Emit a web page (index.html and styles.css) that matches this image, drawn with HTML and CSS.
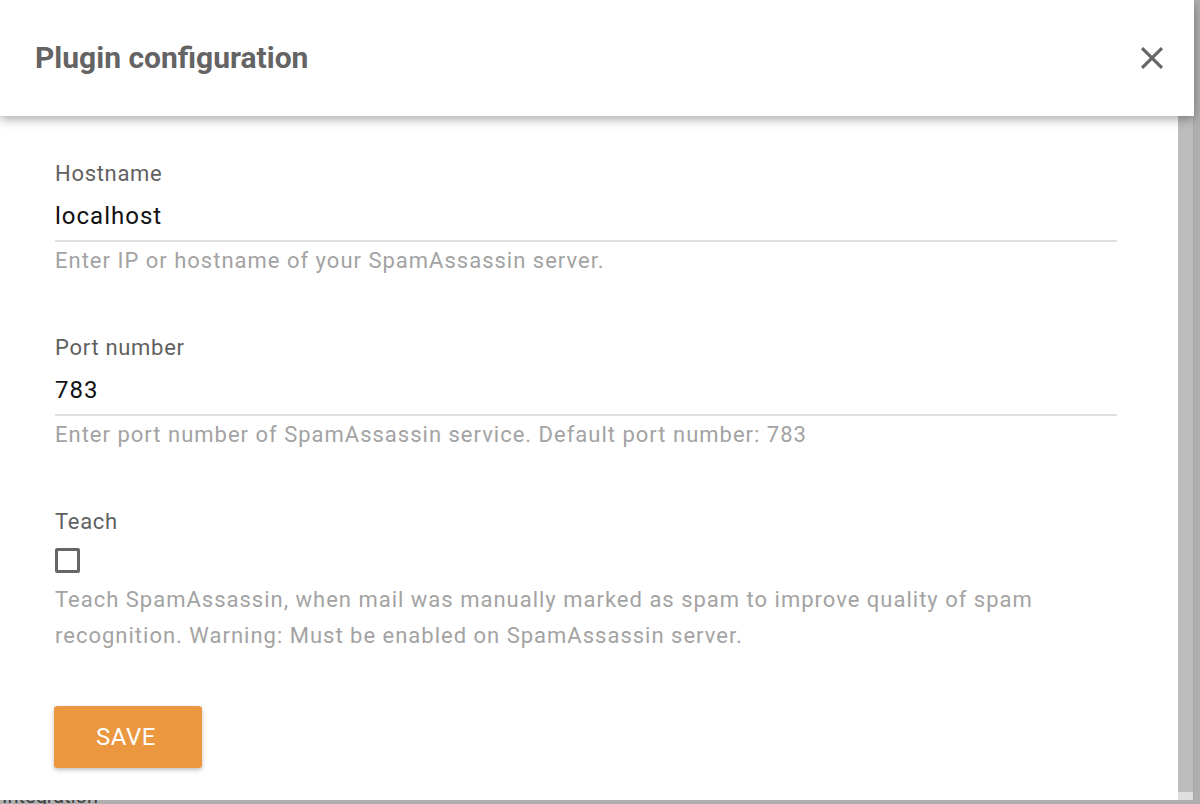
FILE: index.html
```html
<!DOCTYPE html>
<html lang="en">
<head>
<meta charset="utf-8">
<title>Plugin configuration</title>
<link rel="stylesheet" href="styles.css">
</head>
<body>
<div class="page">
  <div class="page-title">Integration</div>
</div>
<div class="overlay"></div>
<div class="dialog">
  <div class="dialog-header">
    <h1 class="dialog-title">Plugin configuration</h1>
    <button class="close-btn" aria-label="Close">
      <svg viewBox="0 0 24 24" width="38" height="38"><path fill="#666" d="M19 6.41L17.59 5 12 10.59 6.41 5 5 6.41 10.59 12 5 17.59 6.41 19 12 13.41 17.59 19 19 17.59 13.41 12z"/></svg>
    </button>
  </div>
  <div class="dialog-main">
    <div class="dialog-content">
      <div class="field">
        <div class="field-label">Hostname</div>
        <div class="field-input">localhost</div>
        <div class="field-help">Enter IP or hostname of your SpamAssassin server.</div>
      </div>
      <div class="field">
        <div class="field-label">Port number</div>
        <div class="field-input">783</div>
        <div class="field-help">Enter port number of SpamAssassin service. Default port number: 783</div>
      </div>
      <div class="field field-check">
        <div class="field-label">Teach</div>
        <div class="checkbox"></div>
        <div class="field-help field-help-wide">Teach SpamAssassin, when mail was manually marked as spam to improve quality of spam recognition. Warning: Must be enabled on SpamAssassin server.</div>
      </div>
      <button class="save-btn">SAVE</button>
    </div>
    <div class="scroll-track"><div class="scroll-end"></div></div>
  </div>
</div>
</body>
</html>
```
FILE: styles.css
```css
html, body {
  margin: 0;
  padding: 0;
  height: 804px;
  overflow: hidden;
  font-family: Roboto, "Liberation Sans", sans-serif;
}

.page {
  height: 804px;
  background: #e6e6e6;
  display: flex;
  flex-direction: column;
  justify-content: flex-end;
}

.page-title {
  font-size: 20px;
  line-height: 24px;
  color: #555;
  margin-bottom: -4px;
  padding-left: 2px;
}

.overlay {
  position: absolute;
  inset: 0;
  background: rgba(0, 0, 0, 0.24);
}

.dialog {
  position: absolute;
  top: 0;
  left: 0;
  width: 1194px;
  height: 800px;
  display: flex;
  flex-direction: column;
}

.dialog-header {
  height: 116px;
  flex: none;
  background: #fff;
  display: flex;
  align-items: center;
  justify-content: space-between;
  padding: 0 23px 0 35px;
  box-sizing: border-box;
  box-shadow: 0 3px 10px rgba(0, 0, 0, 0.35);
  position: relative;
  z-index: 1;
}

.dialog-title {
  margin: 0;
  font-size: 30px;
  font-weight: 700;
  color: #646464;
  line-height: 36px;
}

.close-btn {
  border: 0;
  background: none;
  padding: 0;
  width: 38px;
  height: 38px;
  display: flex;
}

.dialog-main {
  flex: 1;
  display: flex;
}

.dialog-content {
  flex: 1;
  background: #fff;
  padding: 44px 61px 0 55px;
}

.scroll-track {
  width: 15px;
  background: #bdbdbd;
  border-right: 1px solid #a8a8a8;
  display: flex;
  flex-direction: column;
  justify-content: flex-end;
}

.scroll-end {
  height: 8px;
  background: #dedede;
}

.field {
  margin-bottom: 59px;
}

.field-label {
  font-size: 22px;
  letter-spacing: 0.7px;
  line-height: 28px;
  color: #616161;
}

.field-input {
  margin-top: 12px;
  font-size: 24px;
  letter-spacing: 1px;
  line-height: 32px;
  color: #111;
  padding-bottom: 8px;
  border-bottom: 2px solid #dedede;
}

.field-help {
  margin-top: 5px;
  font-size: 22px;
  letter-spacing: 1px;
  line-height: 28px;
  color: #a3a3a3;
}

.checkbox {
  margin-top: 12px;
  width: 19px;
  height: 19px;
  border: 3px solid #666;
  border-radius: 2px;
}

.field-help-wide {
  margin-top: 9px;
  line-height: 36px;
}

.field-check {
  margin-bottom: 52px;
}

.save-btn {
  display: block;
  margin-left: -1px;
  width: 148px;
  height: 62px;
  border: 0;
  border-radius: 3px;
  background: #ea973f;
  color: #fff;
  font-family: Roboto, "Liberation Sans", sans-serif;
  font-size: 24px;
  letter-spacing: 0.5px;
  padding: 0 4px 0 0;
  box-shadow: 0 2px 4px rgba(0, 0, 0, 0.25);
}
```
